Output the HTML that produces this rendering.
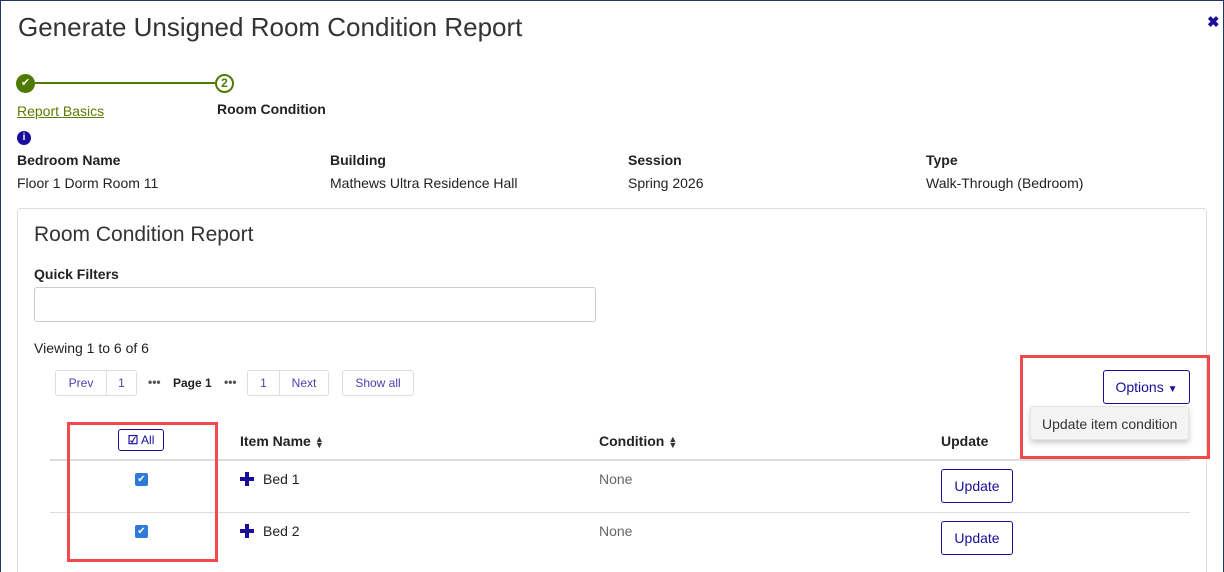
<!DOCTYPE html>
<html><head><meta charset="utf-8"><style>
*{box-sizing:border-box;margin:0;padding:0}
html,body{width:1224px;height:572px;overflow:hidden}
body{background:#fff;font-family:"Liberation Sans",Arial,sans-serif;color:#222;font-size:14px;position:relative}
.frame{position:absolute;left:0;top:0;width:1224px;height:572px;border:1px solid #1f3a68;border-bottom:none}
.abs{position:absolute}
h1{position:absolute;left:18px;top:12px;font-size:26px;font-weight:400;color:#333;letter-spacing:0}
.close{position:absolute;left:1207px;top:13px;color:#1a0d99;font-size:15px;font-weight:bold}
.lbl{font-weight:bold;font-size:14px;color:#222}
.val{font-size:14px;color:#222}
.panel{position:absolute;left:17px;top:208px;width:1190px;height:370px;border:1px solid #ddd;border-radius:4px}
.pg{position:absolute;top:370px;height:26px;border:1px solid #ddd;border-radius:3px;color:#4b3fb5;font-size:12px;line-height:24px;text-align:center;background:#fff}
.th{font-weight:bold;font-size:14px;color:#222}
.cb{position:absolute;width:13px;height:13px;background:#2f7ad9;border-radius:2px;color:#fff;font-size:10px;line-height:13px;text-align:center}
.upd{position:absolute;left:941px;width:72px;height:34px;border:1px solid #1a0d99;border-radius:3px;color:#1a0d99;font-size:14px;line-height:32px;text-align:center}
.plus{position:absolute;left:240px;width:14px;height:14px}
.plus:before{content:"";position:absolute;left:5px;top:0;width:4px;height:14px;background:#1a0d99}
.plus:after{content:"";position:absolute;left:0;top:5px;width:14px;height:4px;background:#1a0d99}
.red{position:absolute;border:3px solid #f04a4a}
.sort{display:inline-block;vertical-align:middle;margin-left:4px;font-size:9px;line-height:6px;color:#333}
</style></head><body>
<div class="frame"></div>
<h1>Generate Unsigned Room Condition Report</h1>
<div class="close">✖</div>
<div class="abs" style="left:16px;top:74px;width:19px;height:19px;border-radius:50%;background:#4e7a00;color:#fff;font-size:11px;text-align:center;line-height:19px">✔</div>
<div class="abs" style="left:35px;top:82px;width:180px;height:2px;background:#4e7a00"></div>
<div class="abs" style="left:215px;top:74px;width:19px;height:19px;border-radius:50%;border:2px solid #4e7a00;color:#4e7a00;font-size:12px;font-weight:bold;text-align:center;line-height:15px">2</div>
<div class="abs" style="left:17px;top:103px;color:#5f7a00;text-decoration:underline;font-size:14px">Report Basics</div>
<div class="abs lbl" style="left:217px;top:101px">Room Condition</div>
<div class="abs" style="left:17px;top:131px;width:14px;height:14px;border-radius:50%;background:#1a0d99;color:#fff;font-size:10px;font-weight:bold;text-align:center;line-height:14px">i</div>
<div class="abs lbl" style="left:17px;top:152px">Bedroom Name</div>
<div class="abs val" style="left:17px;top:175px">Floor 1 Dorm Room 11</div>
<div class="abs lbl" style="left:330px;top:152px">Building</div>
<div class="abs val" style="left:330px;top:175px">Mathews Ultra Residence Hall</div>
<div class="abs lbl" style="left:628px;top:152px">Session</div>
<div class="abs val" style="left:628px;top:175px">Spring 2026</div>
<div class="abs lbl" style="left:926px;top:152px">Type</div>
<div class="abs val" style="left:926px;top:175px">Walk-Through (Bedroom)</div>
<div class="panel"></div>
<div class="abs" style="left:34px;top:223px;font-size:21px;color:#333">Room Condition Report</div>
<div class="abs lbl" style="left:34px;top:266px">Quick Filters</div>
<div class="abs" style="left:34px;top:287px;width:562px;height:35px;border:1px solid #ccc;border-radius:3px"></div>
<div class="abs val" style="left:34px;top:340px">Viewing 1 to 6 of 6</div>
<div class="pg" style="left:55px;width:52px;border-radius:3px 0 0 3px">Prev</div>
<div class="pg" style="left:106px;width:31px;border-radius:0 3px 3px 0">1</div>
<div class="abs" style="left:148px;top:375px;font-size:12px;font-weight:bold;color:#555">•••</div>
<div class="abs" style="left:173px;top:376px;font-size:12px;font-weight:bold">Page 1</div>
<div class="abs" style="left:224px;top:375px;font-size:12px;font-weight:bold;color:#555">•••</div>
<div class="pg" style="left:247px;width:33px;border-radius:3px 0 0 3px">1</div>
<div class="pg" style="left:279px;width:50px;border-radius:0 3px 3px 0">Next</div>
<div class="pg" style="left:342px;width:72px">Show all</div>
<div class="abs" style="left:1103px;top:370px;width:87px;height:34px;border:1px solid #1a0d99;border-radius:3px;color:#1a0d99;font-size:14px;line-height:32px;text-align:center">Options <span style="font-size:10px">▼</span></div>
<div class="abs" style="left:1030px;top:406px;width:159px;height:34px;background:#f4f4f4;border:1px solid #e4e4e4;border-radius:3px;box-shadow:0 3px 6px rgba(0,0,0,.2);font-size:14px;line-height:34px;padding-left:11px;color:#333">Update item condition</div>
<div class="abs" style="left:118px;top:429px;width:46px;height:22px;border:1px solid #1a0d99;border-radius:3px;color:#1a0d99;font-size:12px;line-height:20px;text-align:center"><b>☑</b> All</div>
<div class="abs th" style="left:240px;top:433px">Item Name<span class="sort">▲<br>▼</span></div>
<div class="abs th" style="left:599px;top:433px">Condition<span class="sort">▲<br>▼</span></div>
<div class="abs th" style="left:941px;top:433px">Update</div>
<div class="abs" style="left:50px;top:459px;width:1140px;height:2px;background:#ddd"></div>
<div class="abs" style="left:50px;top:512px;width:1140px;height:1px;background:#ddd"></div>
<div class="cb" style="left:135px;top:473px">✔</div>
<div class="cb" style="left:135px;top:525px">✔</div>
<div class="plus" style="top:472px"></div>
<div class="abs val" style="left:263px;top:471px">Bed 1</div>
<div class="plus" style="top:524px"></div>
<div class="abs val" style="left:263px;top:523px">Bed 2</div>
<div class="abs val" style="left:599px;top:471px;color:#666">None</div>
<div class="abs val" style="left:599px;top:523px;color:#666">None</div>
<div class="upd" style="top:469px">Update</div>
<div class="upd" style="top:521px">Update</div>
<div class="red" style="left:67px;top:422px;width:151px;height:140px"></div>
<div class="red" style="left:1020px;top:355px;width:190px;height:104px"></div>
</body></html>
